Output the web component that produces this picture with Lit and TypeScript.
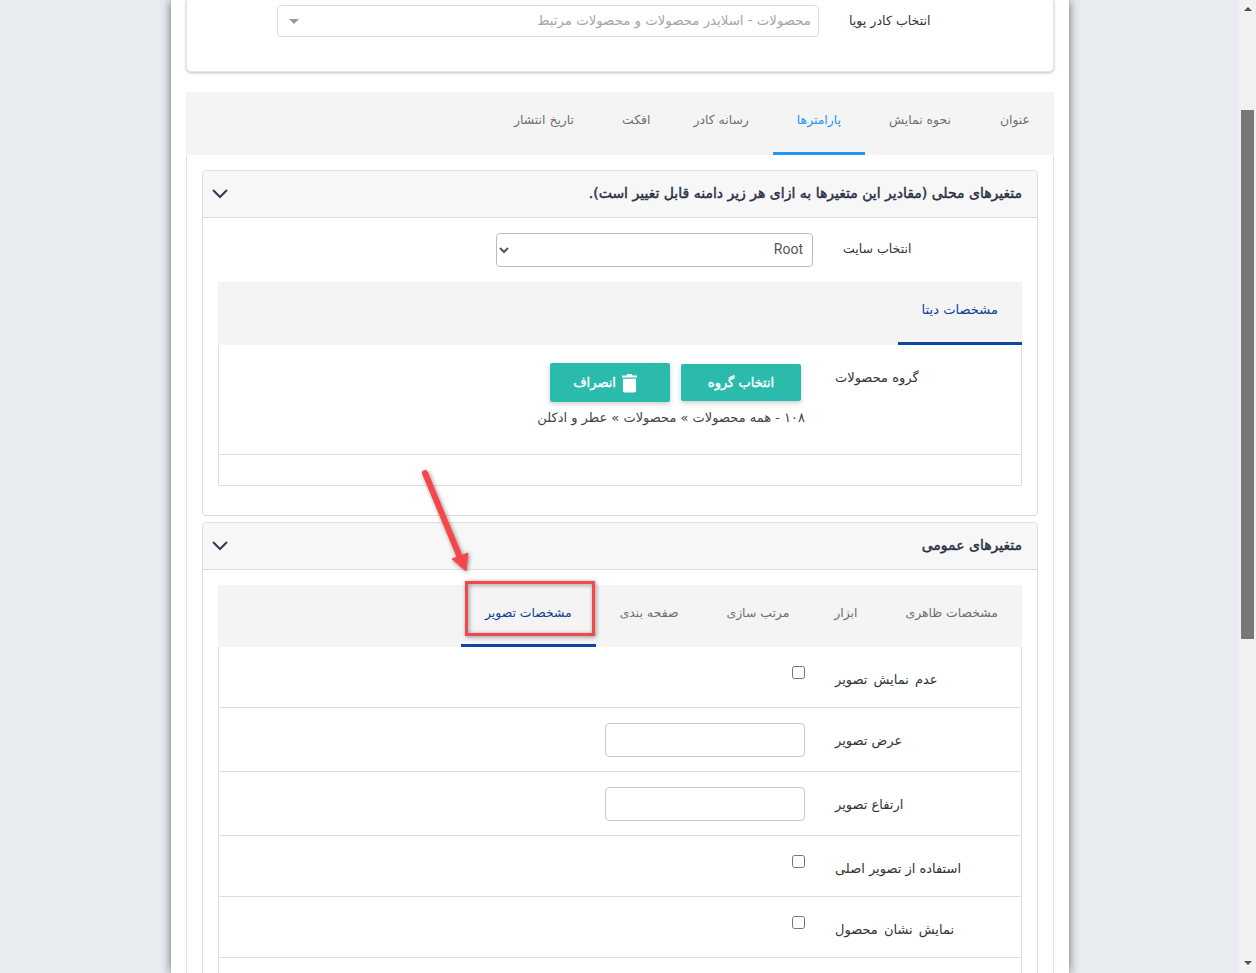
import { LitElement, html, css, svg } from "lit";
import { customElement } from "lit/decorators.js";

const chevron = html`<svg class="chev" width="16" height="12" viewBox="0 0 16 12"><path d="M1 2 L8 9 L15 2" fill="none" stroke="#2b3a55" stroke-width="2"/></svg>`;
const trash = html`<svg width="15" height="20" viewBox="0 0 16 20"><path fill="#fff" d="M5.500 0.500h5l.7 1.500H16v2.200H0V2h4.800zM1 5.500h14v12.700c0 1-.8 1.800-1.800 1.800H2.800c-1 0-1.800-.8-1.800-1.800z"/></svg>`;

@customElement("app-root")
export class AppRoot extends LitElement {
  static styles = css`
    :host { display: block; width: 1256px; height: 973px; overflow: hidden; position: relative; background: #e9ecf1; font-family: "DejaVu Sans", sans-serif; font-size: 13px; color: #444; }
    * { box-sizing: border-box; }
    .layout { display: flex; height: 973px; }
    main { width: 898px; margin-left: 171px; height: 973px; background: #fff; padding: 0 15px; box-shadow: 0 0 10px rgba(0,0,0,.55); overflow: hidden; }
    .bar { margin-left: auto; width: 17px; background: #f1f1f1; display: flex; flex-direction: column; align-items: center; height: 973px; }
    .arrow-up { width: 0; height: 0; margin-top: 7px; border: 4px solid transparent; border-top: 0; border-bottom: 4px solid #505050; }
    .thumb { width: 13px; height: 529px; margin-top: 99px; background: #787878; }
    .arrow-down { width: 0; height: 0; margin-top: 322px; border: 4px solid transparent; border-bottom: 0; border-top: 4px solid #505050; }
    .card { height: 72px; background: #fff; border: 1px solid #e4e4e4; border-top: 0; border-radius: 0 0 5px 5px; box-shadow: 0 1px 3px rgba(0,0,0,.25); direction: rtl; display: flex; align-items: flex-start; padding: 5px 0 0 0; }
    .card .lab { width: 204px; padding: 8px 0 0 0; text-align: left; color: #333; font-size: 12.600px; }
    .card .sel2 { margin-right: 30px; width: 542px; height: 32px; border: 1px solid #ddd; border-radius: 4px; display: flex; justify-content: space-between; align-items: center; padding: 0 7px 1px 11px; color: #a6a6a6; font-size: 13.300px; }
    .caret { width: 0; height: 0; margin-top: 2px; border: 5px solid transparent; border-bottom: 0; border-top: 5px solid #999; }
    .tabs { direction: rtl; display: flex; background: #f4f4f4; height: 63px; }
    .tabs.sub { height: 62px; }
    .tab { padding: 0 24px 6px; display: flex; align-items: center; color: #6f6f6f; border-bottom: 3px solid transparent; white-space: nowrap; font-size: 12.400px; }
    .tabs.sub .tab { padding-bottom: 4px; }
    .tab.wide { padding-left: 25px; }
    .tabs.sub .tab.tight { padding-left: 21px; }
    .tab.tighter { padding-left: 19px; }
    .tab.data { font-size: 13.100px; }
    .tabs.top { margin-top: 20px; }
    .tabs.top .on { color: #2196f3; border-bottom-color: #2196f3; }
    .tabs .navy { color: #0d3f99; border-bottom-color: #0d47a1; }
    .wrap { border: solid #e2e2e2; border-width: 0 1px; padding: 15px 15px 0; }
    .panel { border: 1px solid #dedede; border-radius: 4px; margin-bottom: 6px; }
    .phead { direction: rtl; height: 47px; background: #f7f7f7; border-bottom: 1px solid #dedede; display: flex; align-items: center; justify-content: space-between; padding: 0 15px 0 9px; font-size: 14px; color: #2c3047; -webkit-text-stroke: .45px #2c3047; border-radius: 4px 4px 0 0; }
    .phead span { padding-bottom: 2px; }
    .pbody { padding: 15px 15px 0; }
    .pbody.one { height: 297px; }
    .site { direction: rtl; display: flex; height: 49px; align-items: flex-start; }
    .site .lab { width: 179px; padding-top: 8px; text-align: left; color: #333; font-size: 12.500px; }
    select { margin-right: 30px; width: 317px; height: 34px; background: #fff; border: 1px solid #bdbdbd; border-radius: 4px; font: 14px Roboto, sans-serif; color: #555; padding: 0 5px 2px; direction: rtl; }
    .box { border: solid #dedede; border-width: 0 1px 1px; }
    .grp { direction: rtl; display: flex; height: 110px; border-bottom: 1px solid #dedede; }
    .lbl { width: 186px; text-align: left; color: #333; white-space: nowrap; }
    .lbl.ws { word-spacing: 2px; }
    .grp .lbl { padding-top: 25px; }
    .ctl { margin-right: 30px; padding-top: 18px; }
    .btns { display: flex; align-items: center; gap: 11px; padding-right: 4px; }
    .btn { width: 120px; height: 37px; background: #2bbbad; color: #fff; -webkit-text-stroke: .4px #fff; border-radius: 2px; display: flex; align-items: center; justify-content: center; gap: 6px; box-shadow: 0 2px 5px rgba(0,0,0,.2); }
    .btn.tall { height: 39px; padding-right: 10px; }
    .path { margin-top: 8px; color: #444; white-space: nowrap; }
    .spacer { height: 30px; }
    .rows { border: solid #dedede; border-width: 0 1px; }
    .row { direction: rtl; display: flex; border-bottom: 1px solid #dedede; }
    .row .lbl { padding-top: 25px; }
    .row .ctl { padding-top: 0; display: flex; }
    .row.c { height: 61px; }
    .row.c .ctl { padding-top: 19px; }
    .row.t { height: 64px; }
    .row.t .ctl { padding-top: 15px; }
    input[type=checkbox] { margin: 0; width: 13px; height: 13px; }
    input[type=text] { width: 200px; height: 34px; border: 1px solid #c8c8c8; border-radius: 4px; background: #fff; }
    .note { position: absolute; left: 0; top: 0; pointer-events: none; }
  `;

  private tab(t: string, cls = "") { return html`<div class="tab ${cls}">${t}</div>`; }

  render() {
    return html`
      <div class="layout">
        <main>
          <div class="card">
            <div class="lab">انتخاب کادر پویا</div>
            <div class="sel2"><span>محصولات - اسلایدر محصولات و محصولات مرتبط</span><span class="caret"></span></div>
          </div>
          <div class="tabs top">
            ${this.tab("عنوان", "wide")}${this.tab("نحوه نمایش")}${this.tab("پارامترها", "on")}${this.tab("رسانه کادر", "tighter")}${this.tab("افکت")}${this.tab("تاریخ انتشار")}
          </div>
          <div class="wrap">
            <section class="panel">
              <div class="phead"><span>متغیرهای محلی (مقادیر این متغیرها به ازای هر زیر دامنه قابل تغییر است).</span>${chevron}</div>
              <div class="pbody one">
                <div class="site"><div class="lab">انتخاب سایت</div><select><option>Root</option></select></div>
                <div class="tabs">${this.tab("مشخصات دیتا", "navy data")}</div>
                <div class="box">
                  <div class="grp">
                    <div class="lbl">گروه محصولات</div>
                    <div class="ctl">
                      <div class="btns"><div class="btn">انتخاب گروه</div><div class="btn tall">${trash}<span>انصراف</span></div></div>
                      <div class="path">۱۰۸ - همه محصولات » محصولات » عطر و ادکلن</div>
                    </div>
                  </div>
                  <div class="spacer"></div>
                </div>
              </div>
            </section>
            <section class="panel">
              <div class="phead"><span>متغیرهای عمومی</span>${chevron}</div>
              <div class="pbody">
                <div class="tabs sub">
                  ${this.tab("مشخصات ظاهری")}${this.tab("ابزار", "tight")}${this.tab("مرتب سازی")}${this.tab("صفحه بندی")}${this.tab("مشخصات تصویر", "navy")}
                </div>
                <div class="rows">
                  <div class="row c"><div class="lbl ws">عدم نمایش تصویر</div><div class="ctl"><input type="checkbox"></div></div>
                  <div class="row t"><div class="lbl">عرض تصویر</div><div class="ctl"><input type="text"></div></div>
                  <div class="row t"><div class="lbl">ارتفاع تصویر</div><div class="ctl"><input type="text"></div></div>
                  <div class="row c"><div class="lbl">استفاده از تصویر اصلی</div><div class="ctl"><input type="checkbox"></div></div>
                  <div class="row c"><div class="lbl ws">نمایش نشان محصول</div><div class="ctl"><input type="checkbox"></div></div>
                  <div class="row c"></div>
                </div>
              </div>
            </section>
          </div>
        </main>
        <div class="bar"><div class="arrow-up"></div><div class="thumb"></div><div class="arrow-down"></div></div>
      </div>
      <svg class="note" width="1256" height="973" viewBox="0 0 1256 973">
        <defs><filter id="s" x="-20%" y="-20%" width="140%" height="140%"><feDropShadow dx="1" dy="1" stdDeviation="2" flood-color="#000" flood-opacity=".45"/></filter></defs>
        ${svg`<g filter="url(#s)">
          <rect x="466.500" y="582.500" width="127" height="52" fill="none" stroke="#f44649" stroke-width="3"/>
          <path d="M425 473 L459 555" stroke="#f44649" stroke-width="6" stroke-linecap="round" fill="none"/>
          <path d="M452 559 L468 553 L466 571 Z" fill="#f44649" stroke="#f44649" stroke-width="1"/>
        </g>`}
      </svg>
    `;
  }
}
